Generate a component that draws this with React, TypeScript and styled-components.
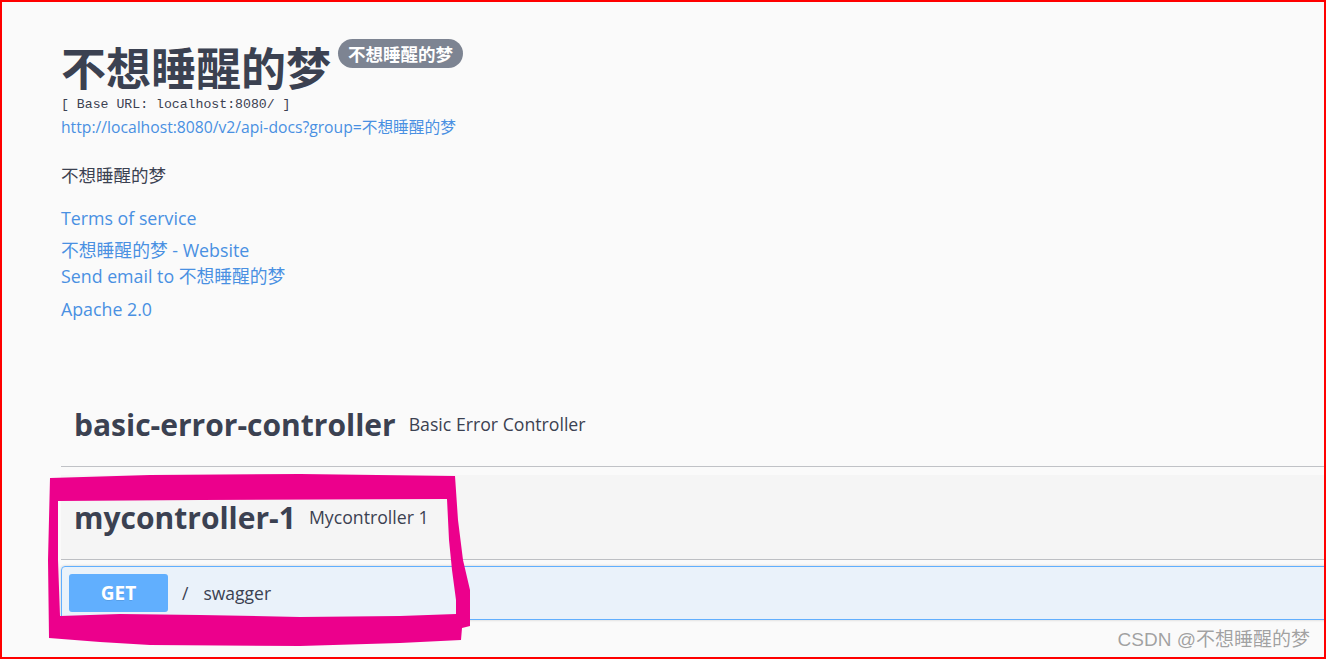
import styled, { createGlobalStyle } from "styled-components";

const GlobalStyle = createGlobalStyle`
  * {
    box-sizing: border-box;
  }

  body {
    margin: 0;
    background: #ffffff;
  }
`

const Frame = styled.div`
  position: relative;
  width: 1326px;
  height: 659px;
  border: 2px solid #ff0000;
  background: #fafafa;
  overflow: hidden;
  font-family: 'Open Sans', 'Noto Sans CJK SC', sans-serif;
  color: #3b4151;
`

const Wrapper = styled.div`
  padding: 0 0 0 59px;
  margin-right: -40px;
`

const Info = styled.section`
  padding-top: 42px;
`

const TitleRow = styled.div`
  display: flex;
  align-items: flex-start;
`

const Title = styled.h2`
  margin: 0;
  font-family: 'Noto Sans CJK SC', sans-serif;
  font-size: 45px;
  line-height: 46px;
  font-weight: 700;
`

const Badge = styled.span`
  margin: -5px 0 0 7px;
  height: 29px;
  padding: 0 10px;
  border-radius: 15px;
  background: #7d8492;
  color: #ffffff;
  font-family: 'Noto Sans CJK SC', sans-serif;
  font-size: 17.5px;
  font-weight: 700;
  line-height: 29px;
`

const BaseUrl = styled.pre`
  margin: 7px 0 0;
  font-family: 'Liberation Mono', monospace;
  font-size: 13.2px;
  line-height: 16px;
`

const Link = styled.a<{ $size?: number; $gap?: number }>`
  display: block;
  margin-top: ${(p) => p.$gap ?? 0}px;
  color: #4990e2;
  text-decoration: none;
  font-size: ${(p) => p.$size ?? 17.8}px;
  line-height: ${(p) => (p.$size && p.$size < 16 ? 20 : 22)}px;
`

const Description = styled.p`
  margin: 27px 0 0;
  font-size: 17.5px;
  line-height: 22px;
`

const TagList = styled.div`
  margin-top: 62px;
`

const TagSection = styled.section`
  display: flex;
  flex-direction: column;
  margin-bottom: 2px;
`

const TagHeader = styled.div<{ $hover?: boolean }>`
  display: flex;
  align-items: center;
  height: 85px;
  padding: 0 20px 0 13px;
  margin-bottom: 6px;
  border-bottom: 1px solid rgba(59, 65, 81, 0.3);
  background: ${(p) => (p.$hover ? "rgba(0, 0, 0, 0.02)" : "transparent")};
`

const TagName = styled.span`
  font-size: 30px;
  font-weight: 700;
`

const TagDesc = styled.small`
  padding-left: 13px;
  font-size: 17.7px;
`

const OpBlock = styled.div`
  border: 1px solid #61affe;
  border-radius: 4px;
  background: rgba(97, 175, 254, 0.1);
  box-shadow: 0 0 3px rgba(0, 0, 0, 0.19);
`

const Summary = styled.div`
  display: flex;
  align-items: center;
  padding: 7px;
`

const Method = styled.span`
  display: flex;
  align-items: center;
  justify-content: center;
  width: 99px;
  height: 38px;
  border-radius: 3px;
  background: #61affe;
  color: #ffffff;
  font-size: 19px;
  font-weight: 700;
  text-shadow: 0 1px 0 rgba(0, 0, 0, 0.1);
`

const Path = styled.span`
  display: flex;
  align-items: center;
  gap: 15px;
  padding: 0 14px;
  font-size: 17.5px;
`

const Watermark = styled.div`
  position: absolute;
  right: 14px;
  bottom: 6px;
  font-family: 'Liberation Sans', 'Noto Sans CJK SC', sans-serif;
  font-size: 19px;
  line-height: 22px;
  color: rgba(120, 120, 120, 0.7);
  text-shadow: 0 0 1px #ffffff;
`

const Marker = styled.svg`
  position: absolute;
  top: -2px;
  left: -2px;
  pointer-events: none;
`

const markerPath =
  "M50,478 L150,475 L300,474 L455,476 L458,520 L463,560 L470,590 L470,626 L462,628 L461,640 L400,643 L300,646 L150,645 L100,642 L49,638 L48,560 Z " +
  "M58,501 L200,500 L447,499 L449,540 L452,570 L456,600 L456,614 L400,616 L300,617 L200,615 L120,614 L60,616 L58,560 Z";

function App() {
    return (
        <>
            <GlobalStyle/>
            <Frame>
                <Wrapper>
                    <Info>
                        <TitleRow>
                            <Title>不想睡醒的梦</Title>
                            <Badge>不想睡醒的梦</Badge>
                        </TitleRow>
                        <BaseUrl>[ Base URL: localhost:8080/ ]</BaseUrl>
                        <Link $size={15.7} $gap={4}>http://localhost:8080/v2/api-docs?group=不想睡醒的梦</Link>
                        <Description>不想睡醒的梦</Description>
                        <Link $gap={21}>Terms of service</Link>
                        <Link $gap={10}>不想睡醒的梦 - Website</Link>
                        <Link $gap={4}>Send email to 不想睡醒的梦</Link>
                        <Link $gap={11}>Apache 2.0</Link>
                    </Info>

                    <TagList>
                        <TagSection>
                            <TagHeader>
                                <TagName>basic-error-controller</TagName>
                                <TagDesc>Basic Error Controller</TagDesc>
                            </TagHeader>
                        </TagSection>
                        <TagSection>
                            <TagHeader $hover>
                                <TagName>mycontroller-1</TagName>
                                <TagDesc>Mycontroller 1</TagDesc>
                            </TagHeader>
                            <OpBlock>
                                <Summary>
                                    <Method>GET</Method>
                                    <Path><span>/</span><span>swagger</span></Path>
                                </Summary>
                            </OpBlock>
                        </TagSection>
                    </TagList>
                </Wrapper>

                <Marker width="1326" height="659" viewBox="0 0 1326 659">
                    <path d={markerPath} fill="#ec008c" fillRule="evenodd"/>
                </Marker>
                <Watermark>CSDN @不想睡醒的梦</Watermark>
            </Frame>
        </>
    );
}

export default App;
